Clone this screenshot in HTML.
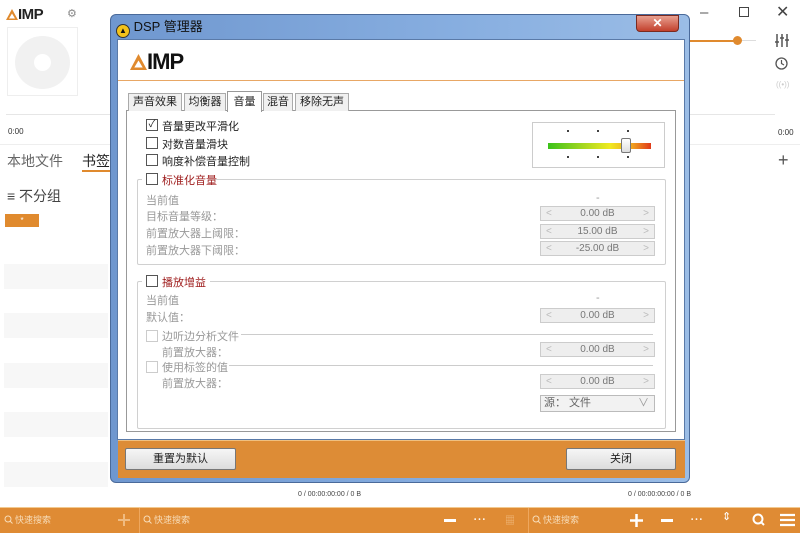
<!DOCTYPE html>
<html><head><meta charset="utf-8"><style>
*{margin:0;padding:0;box-sizing:border-box}
body{width:800px;height:533px;overflow:hidden;background:#fff;position:relative;font-family:"Liberation Sans","Noto Sans CJK SC",sans-serif;font-size:11px;color:#222}
.a{position:absolute}
.row{position:absolute;left:4px;width:104px;height:25px;background:#f7f7f7}
.cb{position:absolute;width:12px;height:12px;border:1px solid #555;background:#fff}
.cbd{border-color:#ccc}
.lbl{position:absolute;font-size:11px;white-space:nowrap}
.g{color:#999}
.spin{position:absolute;left:540px;width:115px;height:15px;border:1px solid #ccc;background:#eee;font-size:10px;color:#777;text-align:center;line-height:13px}
.spin:before{content:"<";position:absolute;left:5px;color:#bbb}
.spin:after{content:">";position:absolute;right:5px;color:#bbb}
.btn{position:absolute;height:22px;border:1px solid #777;border-radius:2px;background:linear-gradient(#f6f6f6,#dcdcdc);text-align:center;line-height:20px;font-size:11px}
.grp{position:absolute;border:1px solid #d0d0d0;border-radius:2px}
.sep{position:absolute;height:1px;background:#bbb}
.srch{position:absolute;top:513px;font-size:9px;color:#f7dcb8}
</style></head><body>
<!-- main app -->
<svg class="a" style="left:6px;top:9px" width="12" height="11" viewBox="0 0 12 11"><path d="M6 0L12 11H0Z M6 4.5L3 9.5H9Z" fill="#e08a2e" fill-rule="evenodd"/></svg>
<div class="a" style="left:18px;top:6px;font:bold 15px 'Liberation Sans';letter-spacing:-0.5px">IMP</div>
<div class="a" style="left:67px;top:7px;color:#888;font-size:11px">&#9881;</div>
<div class="a" style="left:7px;top:27px;width:71px;height:69px;border:1px solid #eee"></div>
<div class="a" style="left:15px;top:36px;width:55px;height:53px;border-radius:50%;background:#f1f1f1"></div>
<div class="a" style="left:34px;top:54px;width:17px;height:17px;border-radius:50%;background:#fff"></div>
<div class="a" style="left:6px;top:114px;width:105px;height:1px;background:#e6e6e6"></div>
<div class="a" style="left:8px;top:127px;font-size:8px;color:#333">0:00</div>
<div class="a" style="left:0;top:144px;width:110px;height:1px;background:#eee"></div>
<div class="a" style="left:7px;top:151px;font-size:14px;color:#666">本地文件</div>
<div class="a" style="left:82px;top:151px;font-size:14px;color:#222">书签</div>
<div class="a" style="left:82px;top:170px;width:28px;height:2px;background:#e08a2e"></div>
<div class="a" style="left:7px;top:186px;font-size:14px;color:#444">&#8801; 不分组</div>
<div class="a" style="left:5px;top:214px;width:34px;height:13px;background:#e08a2e;color:#fff;font-size:8px;text-align:center;line-height:13px">*</div>
<div class="row" style="top:264px"></div><div class="row" style="top:313px"></div><div class="row" style="top:363px"></div><div class="row" style="top:412px"></div><div class="row" style="top:462px"></div>
<!-- right side -->
<div class="a" style="left:700px;top:4px;font-size:15px;color:#555">&#8211;</div>
<div class="a" style="left:739px;top:7px;width:10px;height:10px;border:1px solid #444"></div>
<div class="a" style="left:776px;top:2px;font-size:16px;color:#444">&#10005;</div>
<div class="a" style="left:690px;top:40px;width:48px;height:2px;background:#e08a2e"></div>
<div class="a" style="left:733px;top:36px;width:9px;height:9px;border-radius:50%;background:#e08a2e"></div>
<div class="a" style="left:742px;top:40px;width:14px;height:1px;background:#ddd"></div>
<svg class="a" style="left:775px;top:34px" width="14" height="13" viewBox="0 0 14 13"><g stroke="#555" stroke-width="1.5"><path d="M2 0V13M7 0V13M12 0V13"/><path d="M0 8H4M5 4H9M10 6H14"/></g></svg>
<svg class="a" style="left:775px;top:57px" width="13" height="13" viewBox="0 0 13 13"><circle cx="6.5" cy="6.5" r="5.5" fill="none" stroke="#555" stroke-width="1.3"/><path d="M6.5 3V6.5L9 8" fill="none" stroke="#555" stroke-width="1.2"/></svg>
<div class="a" style="left:776px;top:80px;font-size:8px;color:#ccc">((•))</div>
<div class="a" style="left:690px;top:114px;width:85px;height:1px;background:#e6e6e6"></div>
<div class="a" style="left:778px;top:128px;font-size:8px;color:#333">0:00</div>
<div class="a" style="left:690px;top:144px;width:110px;height:1px;background:#eee"></div>
<div class="a" style="left:778px;top:150px;font-size:18px;color:#555">+</div>
<!-- status / bottom bar -->
<div class="a" style="left:298px;top:491px;font-size:7px;color:#444">0 / 00:00:00:00 / 0 B</div>
<div class="a" style="left:628px;top:491px;font-size:7px;color:#444">0 / 00:00:00:00 / 0 B</div>
<div class="a" style="left:0;top:508px;width:800px;height:25px;background:#df8b34"></div>
<div class="a" style="left:0;top:507px;width:800px;height:1px;background:#f2c98f"></div>
<div class="a" style="left:139px;top:508px;width:1px;height:25px;background:#eea75e"></div>
<div class="a" style="left:528px;top:508px;width:1px;height:25px;background:#eea75e"></div>
<svg class="a" style="left:4px;top:515px" width="9" height="9"><circle cx="4" cy="4" r="3" fill="none" stroke="#f7dcb8"/><path d="M6 6L8.5 8.5" stroke="#f7dcb8"/></svg>
<div class="srch" style="left:15px">快速搜索</div>
<svg class="a" style="left:118px;top:514px" width="12" height="12"><path d="M6 0V12M0 6H12" stroke="#f0bb80" stroke-width="2"/></svg>
<svg class="a" style="left:143px;top:515px" width="9" height="9"><circle cx="4" cy="4" r="3" fill="none" stroke="#f7dcb8"/><path d="M6 6L8.5 8.5" stroke="#f7dcb8"/></svg>
<div class="srch" style="left:154px">快速搜索</div>
<div class="a" style="left:444px;top:519px;width:12px;height:3px;background:#fff"></div>
<div class="a" style="left:473px;top:509px;font-size:13px;color:#fff">&#8943;</div>
<div class="a" style="left:505px;top:512px;font-size:10px;color:#f0bb80">&#9638;</div>
<svg class="a" style="left:532px;top:515px" width="9" height="9"><circle cx="4" cy="4" r="3" fill="none" stroke="#f7dcb8"/><path d="M6 6L8.5 8.5" stroke="#f7dcb8"/></svg>
<div class="srch" style="left:543px">快速搜索</div>
<svg class="a" style="left:630px;top:514px" width="13" height="13"><path d="M6.5 0V13M0 6.5H13" stroke="#fff" stroke-width="2.5"/></svg>
<div class="a" style="left:661px;top:519px;width:12px;height:3px;background:#fff"></div>
<div class="a" style="left:690px;top:509px;font-size:13px;color:#fff">&#8943;</div>
<div class="a" style="left:722px;top:510px;font-size:11px;color:#fff">&#8661;</div>
<svg class="a" style="left:752px;top:513px" width="13" height="13"><circle cx="6" cy="6" r="4.5" fill="none" stroke="#fff" stroke-width="2"/><path d="M8.5 8.5L12 12" stroke="#fff" stroke-width="2"/></svg>
<svg class="a" style="left:780px;top:513px" width="15" height="14"><path d="M0 2H15M0 7H15M0 12H15" stroke="#fff" stroke-width="2.2"/></svg>

<!-- dialog -->
<div class="a" style="left:110px;top:14px;width:580px;height:469px;border-radius:6px;border:1px solid #4a6a9a;background:linear-gradient(90deg,#6f97cf,#87aee0 60%,#9bbde6)"></div>
<div class="a" style="left:116px;top:16px;font-size:13px;color:#111"><span style="display:inline-block;width:14px;height:14px;border-radius:50%;background:#f3c21b;border:1px solid #333;font-size:8px;text-align:center;line-height:12px;vertical-align:-2px">&#9650;</span> DSP 管理器</div>
<div class="a" style="left:636px;top:15px;width:43px;height:17px;border-radius:0 0 4px 4px;background:linear-gradient(#e8a090,#c2402c);border:1px solid #7a2a20;color:#fff;text-align:center;font-size:12px;font-weight:bold;line-height:15px">&#10005;</div>
<div class="a" style="left:117px;top:39px;width:568px;height:401px;background:#fff;border:1px solid #5a7aa8"></div>
<svg class="a" style="left:130px;top:54px" width="17" height="16" viewBox="0 0 17 16"><path d="M8.5 0L17 16H0Z M8.5 6.5L4.3 13.5H12.7Z" fill="#e08a2e" fill-rule="evenodd"/></svg>
<div class="a" style="left:147px;top:49px;font:bold 22px 'Liberation Sans';letter-spacing:-1px;color:#111">IMP</div>
<div class="a" style="left:118px;top:80px;width:566px;height:1px;background:#e8a765"></div>
<!-- tabs -->
<div class="a" style="left:126px;top:110px;width:550px;height:322px;border:1px solid #999"></div>
<div class="a" style="left:128px;top:93px;width:54px;height:18px;border:1px solid #aaa;border-bottom:none;background:#f0f0f0;text-align:center;line-height:17px">声音效果</div>
<div class="a" style="left:184px;top:93px;width:42px;height:18px;border:1px solid #aaa;border-bottom:none;background:#f0f0f0;text-align:center;line-height:17px">均衡器</div>
<div class="a" style="left:227px;top:91px;width:35px;height:21px;border:1px solid #999;border-bottom:none;background:#fff;text-align:center;line-height:20px">音量</div>
<div class="a" style="left:263px;top:93px;width:30px;height:18px;border:1px solid #aaa;border-bottom:none;background:#f0f0f0;text-align:center;line-height:17px">混音</div>
<div class="a" style="left:295px;top:93px;width:54px;height:18px;border:1px solid #aaa;border-bottom:none;background:#f0f0f0;text-align:center;line-height:17px">移除无声</div>
<!-- checkboxes -->
<div class="cb" style="left:146px;top:119px;font-size:10px;line-height:10px;text-align:center">&#10003;</div><div class="lbl" style="left:162px;top:118px">音量更改平滑化</div>
<div class="cb" style="left:146px;top:137px"></div><div class="lbl" style="left:162px;top:136px">对数音量滑块</div>
<div class="cb" style="left:146px;top:154px"></div><div class="lbl" style="left:162px;top:153px">响度补偿音量控制</div>
<!-- slider box -->
<div class="a" style="left:532px;top:122px;width:133px;height:46px;border:1px solid #ccc"></div>
<div class="a" style="left:548px;top:143px;width:103px;height:6px;background:linear-gradient(90deg,#3bc21a,#a8d820 35%,#f0ea20 60%,#f0a020 82%,#e03a1a)"></div>
<div class="a" style="left:621px;top:138px;width:10px;height:15px;border:1px solid #777;border-radius:2px;background:linear-gradient(#fff,#ddd)"></div>
<div class="a" style="left:553px;top:130px;width:100px;height:2px;background:radial-gradient(circle,#333 1px,transparent 1.2px) 0 0/30px 2px"></div>
<div class="a" style="left:553px;top:156px;width:100px;height:2px;background:radial-gradient(circle,#333 1px,transparent 1.2px) 0 0/30px 2px"></div>
<!-- group 1 -->
<div class="grp" style="left:137px;top:179px;width:529px;height:86px"></div>
<div class="a" style="left:142px;top:172px;width:72px;height:15px;background:#fff"></div>
<div class="cb" style="left:146px;top:173px"></div><div class="lbl" style="left:162px;top:172px;color:#a02020">标准化音量</div>
<div class="lbl g" style="left:146px;top:192px">当前值</div>
<div class="lbl g" style="left:596px;top:192px">-</div>
<div class="lbl g" style="left:146px;top:208px">目标音量等级：</div>
<div class="lbl g" style="left:146px;top:225px">前置放大器上阈限：</div>
<div class="lbl g" style="left:146px;top:242px">前置放大器下阈限：</div>
<div class="spin" style="top:206px">0.00 dB</div>
<div class="spin" style="top:224px">15.00 dB</div>
<div class="spin" style="top:241px">-25.00 dB</div>
<!-- group 2 -->
<div class="grp" style="left:137px;top:281px;width:529px;height:148px"></div>
<div class="a" style="left:142px;top:274px;width:68px;height:15px;background:#fff"></div>
<div class="cb" style="left:146px;top:275px"></div><div class="lbl" style="left:162px;top:274px;color:#a02020">播放增益</div>
<div class="lbl g" style="left:146px;top:292px">当前值</div>
<div class="lbl g" style="left:596px;top:292px">-</div>
<div class="lbl g" style="left:146px;top:309px">默认值：</div>
<div class="spin" style="top:308px">0.00 dB</div>
<div class="cb cbd" style="left:146px;top:330px"></div><div class="lbl g" style="left:162px;top:328px">边听边分析文件</div>
<div class="sep" style="left:241px;top:334px;width:412px;background:#ccc"></div>
<div class="lbl g" style="left:162px;top:344px">前置放大器：</div>
<div class="spin" style="top:342px">0.00 dB</div>
<div class="cb cbd" style="left:146px;top:361px"></div><div class="lbl g" style="left:162px;top:359px">使用标签的值</div>
<div class="sep" style="left:229px;top:365px;width:424px;background:#ccc"></div>
<div class="lbl g" style="left:162px;top:375px">前置放大器：</div>
<div class="spin" style="top:374px">0.00 dB</div>
<div class="a" style="left:540px;top:395px;width:115px;height:17px;border:1px solid #bbb;background:#f2f2f2;font-size:11px;color:#666;padding-left:3px;line-height:15px">源： 文件<span style="position:absolute;right:5px;color:#999">&#8744;</span></div>
<!-- orange footer -->
<div class="a" style="left:118px;top:440px;width:567px;height:38px;background:#dd8c36;border-top:1px solid #f0c080"></div>
<div class="btn" style="left:125px;top:448px;width:111px">重置为默认</div>
<div class="btn" style="left:566px;top:448px;width:110px">关闭</div>
</body></html>
